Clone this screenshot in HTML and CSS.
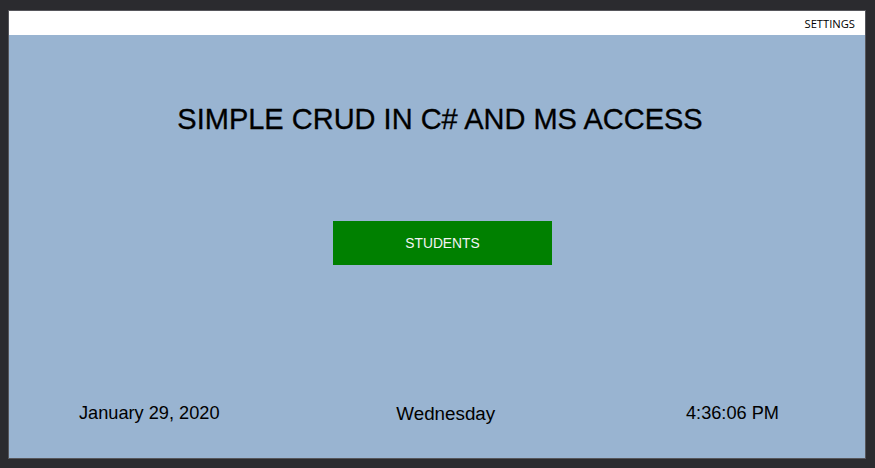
FILE: index.html
```html
<!DOCTYPE html>
<html>
<head>
<meta charset="utf-8">
<link rel="stylesheet" href="styles.css">
</head>
<body>
<div class="window">
  <div class="menubar"><span class="menu-item">SETTINGS</span></div>
  <div class="main">
    <h1 class="title">SIMPLE CRUD IN C# AND MS ACCESS</h1>
    <div class="btn-row"><button class="btn-students">STUDENTS</button></div>
    <div class="spacer"></div>
    <div class="footer">
      <span class="date">January 29, 2020</span>
      <span class="day">Wednesday</span>
      <span class="time">4:36:06 PM</span>
    </div>
  </div>
</div>
</body>
</html>
```

FILE: styles.css
```css
html, body {
  margin: 0;
  padding: 0;
  height: 100%;
}
body {
  background: #2b2b2f;
  padding: 10px 9px 9px 8px;
  box-sizing: border-box;
  height: 468px;
  overflow: hidden;
}
.window {
  height: 449px;
  border: 1px solid #56565b;
  box-sizing: border-box;
  display: flex;
  flex-direction: column;
  background: #99b4d1;
}
.menubar {
  height: 24px;
  background: #ffffff;
  display: flex;
  align-items: center;
  justify-content: flex-end;
  padding-right: 10px;
  flex-shrink: 0;
}
.menu-item {
  font-family: "Open Sans", "Noto Sans", sans-serif;
  font-size: 11.2px;
  color: #000;
}
.main {
  flex: 1;
  display: flex;
  flex-direction: column;
  font-family: "Liberation Sans", Arial, sans-serif;
}
.title {
  margin: 68px 0 0 0;
  font-weight: normal;
  font-size: 29px;
  line-height: 32px;
  text-align: center;
  padding-left: 6px;
  color: #000;
  -webkit-text-stroke: 0.3px #000;
}
.btn-row {
  display: flex;
  padding-left: 324px;
  margin-top: 86px;
}
.btn-students {
  width: 219px;
  height: 44px;
  background: #008000;
  border: none;
  color: #f4f4f4;
  font-family: "Liberation Sans", Arial, sans-serif;
  font-size: 13.8px;
  padding: 0;
}
.spacer {
  flex: 1;
}
.footer {
  display: flex;
  justify-content: space-between;
  padding: 0 86px 34px 70px;
  font-size: 18.2px;
  line-height: 21px;
  color: #000;
}
.day {
  font-size: 18.8px;
  margin-right: 14px;
}
```
